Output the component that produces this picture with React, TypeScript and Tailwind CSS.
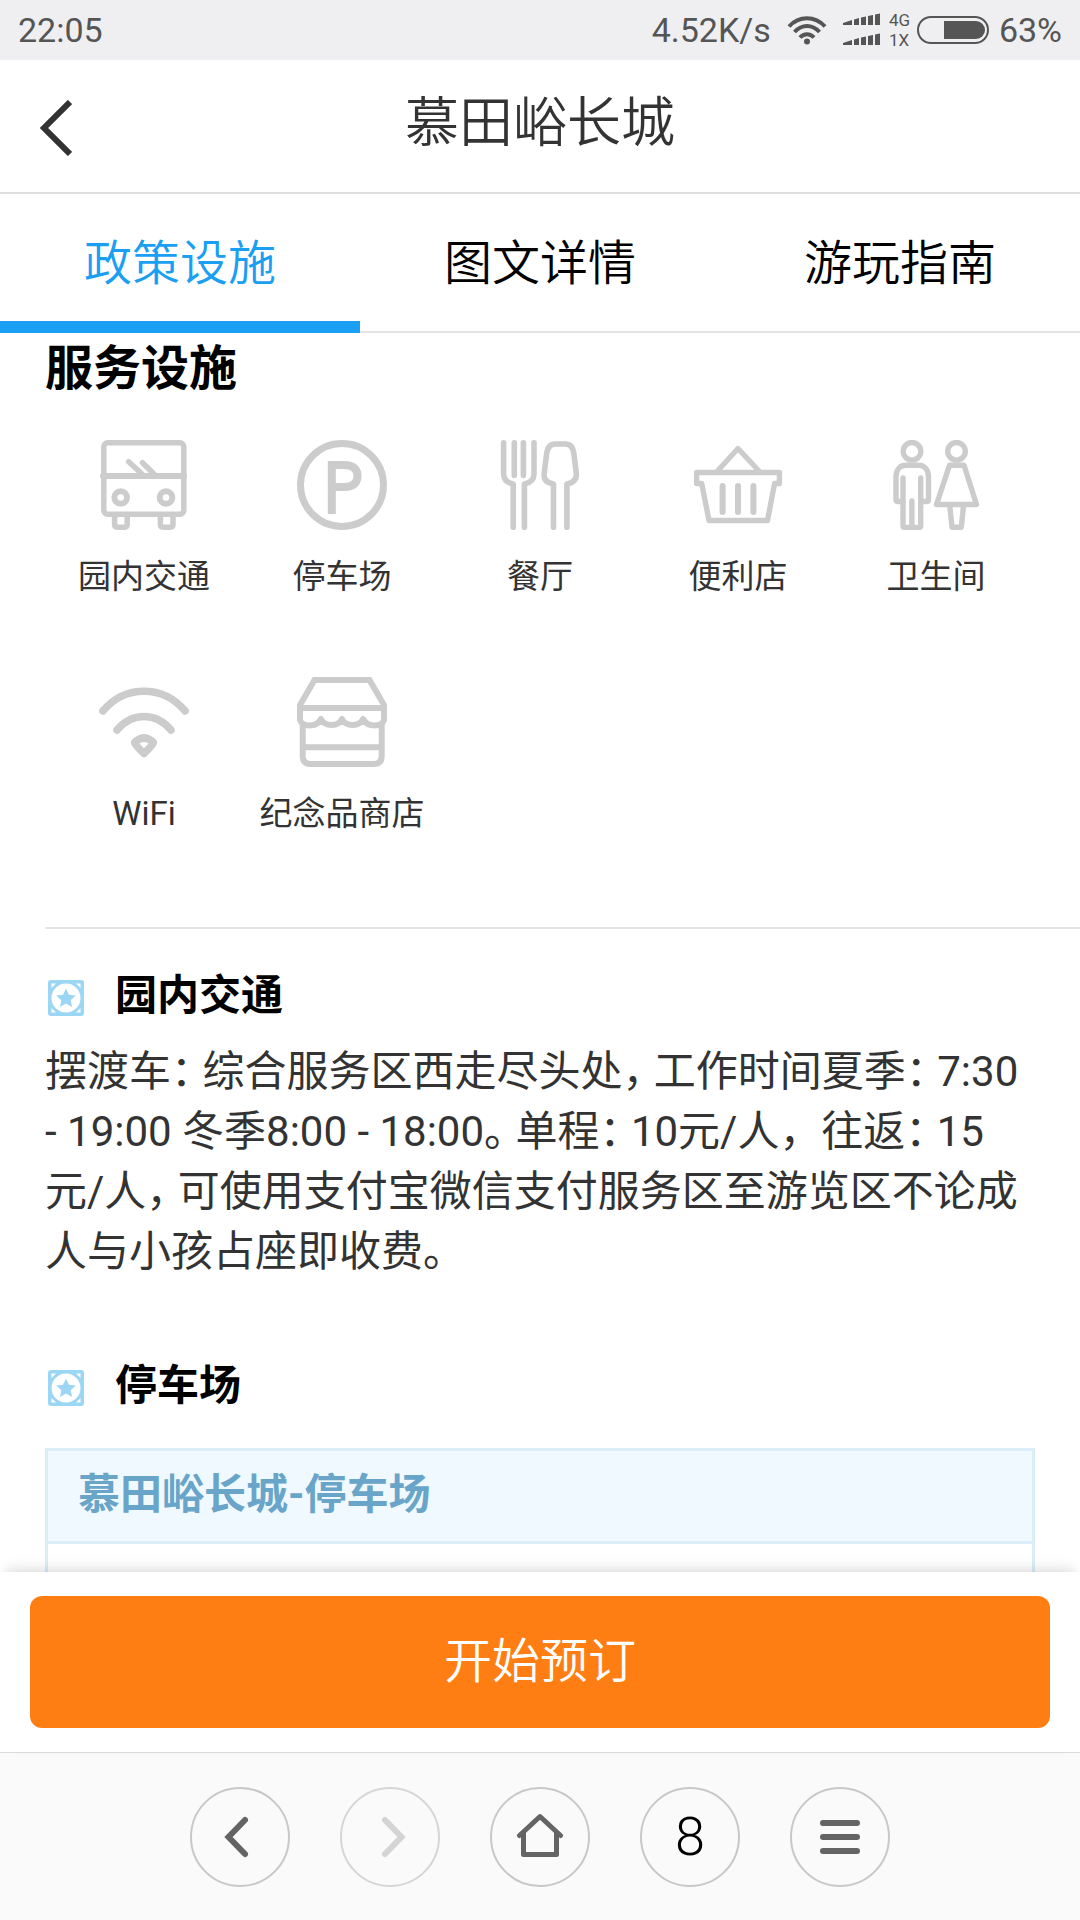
import React, { useState } from 'react';

interface Facility {
  name: string;
  icon: React.ReactNode;
}

const FACILITIES: Facility[] = [
  {
    name: '园内交通',
    icon: (
      <g strokeWidth="5.5">
        <rect x="4.8" y="2.8" width="80" height="71.5" rx="4" />
        <path d="M4 36H85" strokeWidth="6" />
        <circle cx="21.7" cy="57.5" r="6.3" strokeWidth="6" />
        <circle cx="67" cy="57.5" r="6.3" strokeWidth="6" />
        <path d="M15.6 76V84.5q0 2.7 2.7 2.7h7.2q2.7 0 2.7-2.7V76M61.4 76V84.5q0 2.7 2.7 2.7h7.2q2.7 0 2.7-2.7V76" />
        <path d="M29.7 21.7L43 34M43.5 22.7L55 34" />
      </g>
    ),
  },
  {
    name: '停车场',
    icon: (
      <g strokeWidth="7">
        <circle cx="45" cy="45" r="41.5" />
        <path d="M34.8 74V25H47.5c9 0 13 4.5 13 11s-4 11-13 11H35" strokeWidth="8" strokeLinecap="butt" strokeLinejoin="miter" />
      </g>
    ),
  },
  {
    name: '餐厅',
    icon: (
      <g strokeWidth="5.6">
        <path d="M8.6 2.8V34q0 8 9.6 10V87.2M39 2.8V34q0 8-9.6 10V87.2M19.3 2.8V35.5M28.4 2.8V35.5" />
        <path d="M58.5 87.2V44c-6-1-10-4-9.4-10l2.5-20c.8-6 3.2-10 8.4-10h10.5c5.2 0 7.7 4 8.4 10l2.5 20c0 6-4 9-9.5 10V87.2" />
      </g>
    ),
  },
  {
    name: '便利店',
    icon: (
      <g strokeWidth="5.4">
        <path d="M24.5 31L45 8.5L66 31" />
        <path d="M3.6 32.5H86.4V43.5H81.6L74.5 80.5H16L8.7 43.5H3.6Z" />
        <path d="M29.6 46V72M45 46V72M60.4 46V72" strokeWidth="6" />
      </g>
    ),
  },
  {
    name: '卫生间',
    icon: (
      <g strokeWidth="5.4">
        <circle cx="21" cy="11.3" r="8.8" />
        <path d="M12 38V85.5q0 2 2 2H27.7q2 0 2-2V38M20.9 61V87" />
        <path d="M12 61.5H7q-2 0-2-2V37c0-7 4-11.7 10-11.7h12.5c6 0 10 4.7 10 11.7V59.5q0 2-2 2H30" />
        <circle cx="65.5" cy="11.3" r="8.8" />
        <path d="M58.5 25.3H73L85.5 64.5H45.5ZM58.8 66L61 87.2H70.3L72.5 66" />
      </g>
    ),
  },
  {
    name: 'WiFi',
    icon: (
      <g strokeWidth="7.5">
        <path d="M3.8 34C26 7.5 64 7.5 86.2 34M18 53C33 35 57 35 72 53" />
        <path d="M35.5 65.5Q45 56.5 54.5 65.5Q54.5 67.5 45 76.5Q35.5 67.5 35.5 65.5Z" />
      </g>
    ),
  },
  {
    name: '纪念品商店',
    icon: (
      <g strokeWidth="6">
        <path d="M3 31V28L17.5 3H72.5L87 28V31Z" strokeLinejoin="miter" />
        <path d="M3 31V43C5 50 19 51 24 42C28 50 41 50 45 42C49 50 62 50 66 42C71 51 85 50 87 43V31" />
        <path d="M5.7 47V79q0 8 8 8H76.7q8 0 8-8V47M6 70.3H84" />
      </g>
    ),
  },
];

const TABS = ['政策设施', '图文详情', '游玩指南'];

// Punctuation is set half-width below, so each mark is followed by a space
const TRAFFIC_TEXT =
  '摆渡车： 综合服务区西走尽头处， 工作时间夏季： 7:30 - 19:00 冬季8:00 - 18:00。 单程： 10元/人， \u00a0往返： 15元/人， 可使用支付宝微信支付服务区至游览区不论成人与小孩占座即收费。';

const StatusBar = () => (
  <div className="flex h-[60px] shrink-0 items-center justify-between bg-[#efeff1] px-[18px] font-['Roboto',sans-serif] text-[34px] leading-none text-[#555]">
    <span>22:05</span>
    <div className="flex items-center">
      <span className="mr-4">4.52K/s</span>
      <svg width="40" height="30" viewBox="0 0 40 30" fill="none" stroke="currentColor" strokeWidth="4" className="mr-4">
        <path d="M2 11.5C12 .5 28 .5 38 11.5M7.5 17C15 9 25 9 32.5 17M13 22.500C17 18 23 18 27 22.500" />
        <circle cx="20" cy="26.5" r="3" fill="currentColor" stroke="none" />
      </svg>
      <svg width="38" height="34" viewBox="0 0 38 34" fill="currentColor" className="mr-2">
        {[0, 20].map((y) => (
          <path key={y} transform={`translate(0 ${y})`} d="M0 10L9 7V12H0ZM11 6.5L16 5V12H11ZM18 4.5L23 3.5V12H18ZM25 3L30 2V12H25ZM32 1.5L37 .5V12H32Z" />
        ))}
      </svg>
      <div className="mr-1 flex w-6 flex-col text-[17px] leading-5">
        <span>4G</span>
        <span>1X</span>
      </div>
      <svg width="72" height="28" viewBox="0 0 72 28" className="mr-[10px]">
        <rect x="1" y="1" width="70" height="26" rx="13" fill="none" stroke="currentColor" strokeWidth="2" />
        <path d="M27 5H59a9 9 0 0 1 0 18H27Z" fill="currentColor" />
      </svg>
      <span>63%</span>
    </div>
  </div>
);

const SectionTitle: React.FC<{ children: React.ReactNode }> = ({ children }) => (
  <h3 className="flex items-center text-[42px] font-bold leading-[60px] text-black">
    <svg width="36" height="36" viewBox="0 0 36 36" className="ml-[3px] mr-[31px] mt-1">
      <rect width="36" height="36" rx="3" fill="#9bd6f5" />
      <path d="M3.5 3.5H8L3.5 8ZM32.5 3.5H28L32.5 8ZM3.5 32.5H8L3.5 28ZM32.5 32.5H28L32.5 28Z" fill="#fff" />
      <circle cx="18" cy="18" r="14.5" fill="#fff" />
      <path d="M18 8.5L20.9 14.8L27.8 15.5L22.7 20.2L24.1 27L18 23.6L11.9 27L13.3 20.2L8.2 15.5L15.1 14.8Z" fill="#9bd6f5" />
    </svg>
    {children}
  </h3>
);

const NAV_CIRCLE = 'flex h-[100px] w-[100px] items-center justify-center rounded-full border-2 border-[#c8c8c8] text-[#646464] disabled:border-[#d6d6d6] disabled:text-[#d4d4d4]';

const BrowserBar = () => (
  <nav className="flex h-[168px] shrink-0 items-center justify-center gap-[50px] border-t border-[#dcdcdc] bg-[#fafafa] pt-[1px]">
    <button className={NAV_CIRCLE} aria-label="后退">
      <svg width="48" height="48" viewBox="0 0 48 48" fill="none" stroke="currentColor" strokeWidth="6" strokeLinecap="round">
        <path d="M29 7L12.5 24L29 41" />
      </svg>
    </button>
    <button className={NAV_CIRCLE} aria-label="前进" disabled>
      <svg width="48" height="48" viewBox="0 0 48 48" fill="none" stroke="currentColor" strokeWidth="6" strokeLinecap="round">
        <path d="M19 7L35.5 24L19 41" />
      </svg>
    </button>
    <button className={NAV_CIRCLE} aria-label="主页">
      <svg width="48" height="48" viewBox="0 0 48 48" fill="none" stroke="currentColor" strokeWidth="5" strokeLinecap="round" strokeLinejoin="round">
        <path d="M3.5 22.5L24 3.5L44.5 22.5M7.5 20V41.5H40.5V20" />
      </svg>
    </button>
    <button className={NAV_CIRCLE} aria-label="窗口">
      <span className="font-['Roboto',sans-serif] text-[54px] font-light leading-none text-black">8</span>
    </button>
    <button className={NAV_CIRCLE} aria-label="菜单">
      <svg width="48" height="48" viewBox="0 0 48 48" stroke="currentColor" strokeWidth="6" strokeLinecap="round">
        <path d="M7 10H41M7 24H41M7 38H41" />
      </svg>
    </button>
  </nav>
);

const App: React.FC = () => {
  const [activeTab, setActiveTab] = useState(0);

  return (
    <div className="flex h-screen flex-col bg-white font-['Roboto','Noto_Sans_CJK_SC',sans-serif]" lang="zh-CN">
      <StatusBar />

      <header className="grid h-[134px] shrink-0 grid-cols-[120px_1fr_120px] items-center border-b-2 border-[#dedede]">
        <button aria-label="返回" className="pl-10 pt-1">
          <svg width="32" height="56" viewBox="0 0 32 56" fill="none" stroke="#333" strokeWidth="6">
            <path d="M30 2L4 28L30 54" />
          </svg>
        </button>
        <h1 className="pb-1 text-center text-[54px] font-[350] leading-[72px] text-[#333]">慕田峪长城</h1>
      </header>

      <div role="tablist" className="grid h-[139px] shrink-0 grid-cols-3">
        {TABS.map((tab, i) => (
          <button
            key={tab}
            role="tab"
            aria-selected={i === activeTab}
            onClick={() => setActiveTab(i)}
            className={`flex flex-col justify-between pt-[34px] text-[48px] font-[350] leading-[72px] ${i === activeTab ? 'text-[#1a9ff2]' : 'text-black'}`}
          >
            <span className="w-full text-center">{tab}</span>
            <span className={`w-full ${i === activeTab ? 'h-3 bg-[#1a9ff2]' : 'h-[2px] bg-[#e3e3e3]'}`}></span>
          </button>
        ))}
      </div>

      <main className="min-h-0 flex-1 overflow-y-auto pl-[45px] [scrollbar-width:none]">
        <section className="border-b-2 border-[#e3e3e3] pb-[89px] pt-[6px]">
          <h2 className="text-[48px] font-bold leading-[60px] text-black">服务设施</h2>
          <ul className="mr-[45px] mt-[41px] grid grid-cols-5 gap-y-[76px]">
            {FACILITIES.map((item) => (
              <li key={item.name} className="flex flex-col items-center">
                <svg width="90" height="90" viewBox="0 0 90 90" fill="none" stroke="#ccc" strokeLinecap="round" strokeLinejoin="round">
                  {item.icon}
                </svg>
                <span className="mt-[22px] whitespace-nowrap text-[33px] leading-[49px] text-[#333]">{item.name}</span>
              </li>
            ))}
          </ul>
        </section>

        <section className="pt-[37px]">
          <SectionTitle>园内交通</SectionTitle>
          <p className="mr-[45px] mt-4 text-[42px] leading-[60px] text-[#333] [font-feature-settings:'halt']">{TRAFFIC_TEXT}</p>
        </section>

        <section className="pt-[74px]">
          <SectionTitle>停车场</SectionTitle>
          <div className="mr-[45px] mt-8 border-[3px] border-[#dbeef8]">
            <h4 className="border-b-[3px] border-[#dbeef8] bg-[#f0f9ff] px-[30px] pb-4 pt-[14px] text-[42px] font-bold leading-[60px] text-[#69a5c8]">慕田峪长城-停车场</h4>
            <div className="h-[120px]"></div>
          </div>
        </section>
      </main>

      <footer className="relative z-10 h-[180px] shrink-0 bg-white px-[30px] py-6 shadow-[0_-6px_15px_-6px_rgba(0,0,0,0.2)]">
        <button className="h-full w-full rounded-xl bg-[#ff7e14] text-[48px] font-[350] leading-[72px] text-white">开始预订</button>
      </footer>

      <BrowserBar />
    </div>
  );
};

export default App;
